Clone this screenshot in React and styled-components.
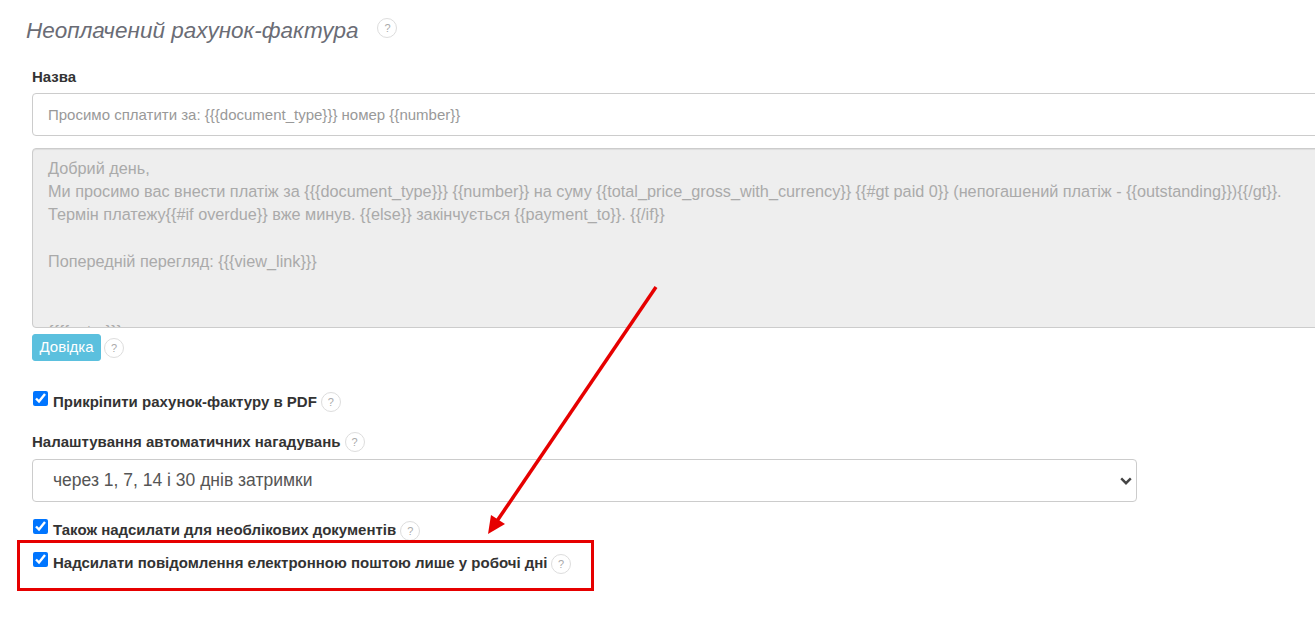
import React from 'react';
import styled, { createGlobalStyle } from 'styled-components';

const BODY_TEXT = `Добрий день,
Ми просимо вас внести платіж за {{{document_type}}} {{number}} на суму {{total_price_gross_with_currency}} {{#gt paid 0}} (непогашений платіж - {{outstanding}}){{/gt}}.
Термін платежу{{#if overdue}} вже минув. {{else}} закінчується {{payment_to}}. {{/if}}

Попередній перегляд: {{{view_link}}}


{{{footer}}}`;

const CHEVRON = `url("data:image/svg+xml,%3Csvg xmlns='http://www.w3.org/2000/svg' width='12' height='8' viewBox='0 0 12 8'%3E%3Cpath d='M1.2 1.4 6 6.2l4.8-4.8' fill='none' stroke='%23444' stroke-width='2.4'/%3E%3C/svg%3E")`;

const GlobalStyle = createGlobalStyle`
  html, body {
    margin: 0;
    height: 100%;
    overflow: hidden;
    background: #fff;
  }
  body {
    font-family: "Liberation Sans", Arial, sans-serif;
    color: #333;
  }
`;

const Page = styled.div`
  position: relative;
  width: 1315px;
  height: 624px;
  overflow: hidden;
  padding: 15px 0 0 26px;
  box-sizing: border-box;
`;
const TitleRow = styled.div`
  display: flex;
  align-items: flex-start;
  height: 51px;
`;
const Title = styled.h3`
  margin: 1px 0 0;
  font-size: 22.5px;
  line-height: 30px;
  font-weight: 400;
  font-style: italic;
  color: #6a6c75;
`;
const Hint = styled.span`
  flex: none;
  display: inline-flex;
  align-items: center;
  justify-content: center;
  width: 20px;
  height: 20px;
  box-sizing: border-box;
  margin-left: ${({ $gap }) => $gap || 4}px;
  margin-top: ${({ $top }) => $top || 0}px;
  border: 1px solid #ddd;
  border-radius: 50%;
  background: #fff;
  color: #aaa;
  font-size: 11px;
  font-weight: 400;
`;
const Form = styled.div`
  display: flex;
  flex-direction: column;
  align-items: flex-start;
  margin-left: 6px;
`;
const Label = styled.label`
  display: flex;
  align-items: center;
  height: 20px;
  font-size: 15px;
  font-weight: 700;
  white-space: nowrap;
  margin-top: ${({ $top }) => $top || 0}px;
`;
const TextInput = styled.input`
  display: block;
  width: 1400px;
  height: 43px;
  box-sizing: border-box;
  margin-top: 7px;
  padding: 0 15px;
  border: 1px solid #ccc;
  border-radius: 4px;
  background: #fff;
  font: 400 15px "Liberation Sans", Arial, sans-serif;
  color: #999;
  outline: none;
`;
const BodyArea = styled.textarea`
  display: block;
  width: 1400px;
  height: 180px;
  box-sizing: border-box;
  margin-top: 12px;
  padding: 7.5px 15px;
  border: 1px solid #ccc;
  border-radius: 4px;
  background: #eee;
  font: 400 16.25px/23.4px "Liberation Sans", Arial, sans-serif;
  color: #aaa;
  overflow: hidden;
  resize: none;
  outline: none;
  box-shadow: inset 0 1px 1px rgba(0, 0, 0, 0.075);
`;
const HelpRow = styled.div`
  display: flex;
  align-items: center;
  margin-top: 6px;
`;
const HelpButton = styled.button`
  width: 69px;
  height: 27px;
  padding: 0 0 2px;
  border: 1px solid #5bc0de;
  border-radius: 3px;
  background: #5bc0de;
  color: #fff;
  font: 400 15px "Liberation Sans", Arial, sans-serif;
`;
const CheckRow = styled.label`
  display: flex;
  align-items: flex-start;
  font-size: 15px;
  font-weight: 700;
  line-height: 20px;
  white-space: nowrap;
  margin-top: ${({ $top }) => $top}px;
`;
const Check = styled.input`
  width: 15.6px;
  height: 15.6px;
  margin: 0.5px 4.6px 0 0.8px;
  accent-color: #0075ff;
  flex: none;
`;
const CheckText = styled.span`
  margin-top: 2px;
`;
const Select = styled.select`
  display: block;
  width: 1105px;
  height: 43px;
  box-sizing: border-box;
  margin-top: 8px;
  padding: 0 16px 2px 20px;
  border: 1px solid #ccc;
  border-radius: 4px;
  appearance: none;
  background: #fff ${CHEVRON} no-repeat right 4px center;
  font: 400 17.5px "Liberation Sans", Arial, sans-serif;
  color: #555;
  outline: none;
`;
const Highlight = styled.div`
  position: absolute;
  left: 17px;
  top: 540px;
  width: 577px;
  height: 51px;
  box-sizing: border-box;
  border: 3px solid #e60000;
  pointer-events: none;
`;
const ArrowLayer = styled.svg`
  position: absolute;
  left: 0;
  top: 0;
  pointer-events: none;
`;

const App = () => (
  <Page>
    <GlobalStyle />
    <TitleRow>
      <Title>Неоплачений рахунок-фактура</Title>
      <Hint $gap={19} $top={3}>?</Hint>
    </TitleRow>
    <Form>
      <Label>Назва</Label>
      <TextInput readOnly value="Просимо сплатити за: {{{document_type}}} номер {{number}}" />
      <BodyArea readOnly value={BODY_TEXT} />
      <HelpRow>
        <HelpButton type="button">Довідка</HelpButton>
        <Hint $gap={3}>?</Hint>
      </HelpRow>
      <CheckRow $top={29}>
        <Check type="checkbox" defaultChecked />
        <CheckText>Прикріпити рахунок-фактуру в PDF</CheckText>
        <Hint $top={2}>?</Hint>
      </CheckRow>
      <Label $top={19}>
        Налаштування автоматичних нагадувань
        <Hint $top={2}>?</Hint>
      </Label>
      <Select defaultValue="1">
        <option value="1">через 1, 7, 14 і 30 днів затримки</option>
      </Select>
      <CheckRow $top={16}>
        <Check type="checkbox" defaultChecked />
        <CheckText>Також надсилати для необлікових документів</CheckText>
        <Hint $top={3}>?</Hint>
      </CheckRow>
      <CheckRow $top={10}>
        <Check type="checkbox" defaultChecked />
        <CheckText>Надсилати повідомлення електронною поштою лише у робочі дні</CheckText>
        <Hint $gap={3.6} $top={3}>?</Hint>
      </CheckRow>
    </Form>
    <Highlight />
    <ArrowLayer width="1315" height="624" viewBox="0 0 1315 624">
      <line x1="656" y1="287" x2="497" y2="521" stroke="#e60000" strokeWidth="3.5" />
      <polygon points="488,534 491,515 505,524" fill="#e60000" />
    </ArrowLayer>
  </Page>
);

export default App;
